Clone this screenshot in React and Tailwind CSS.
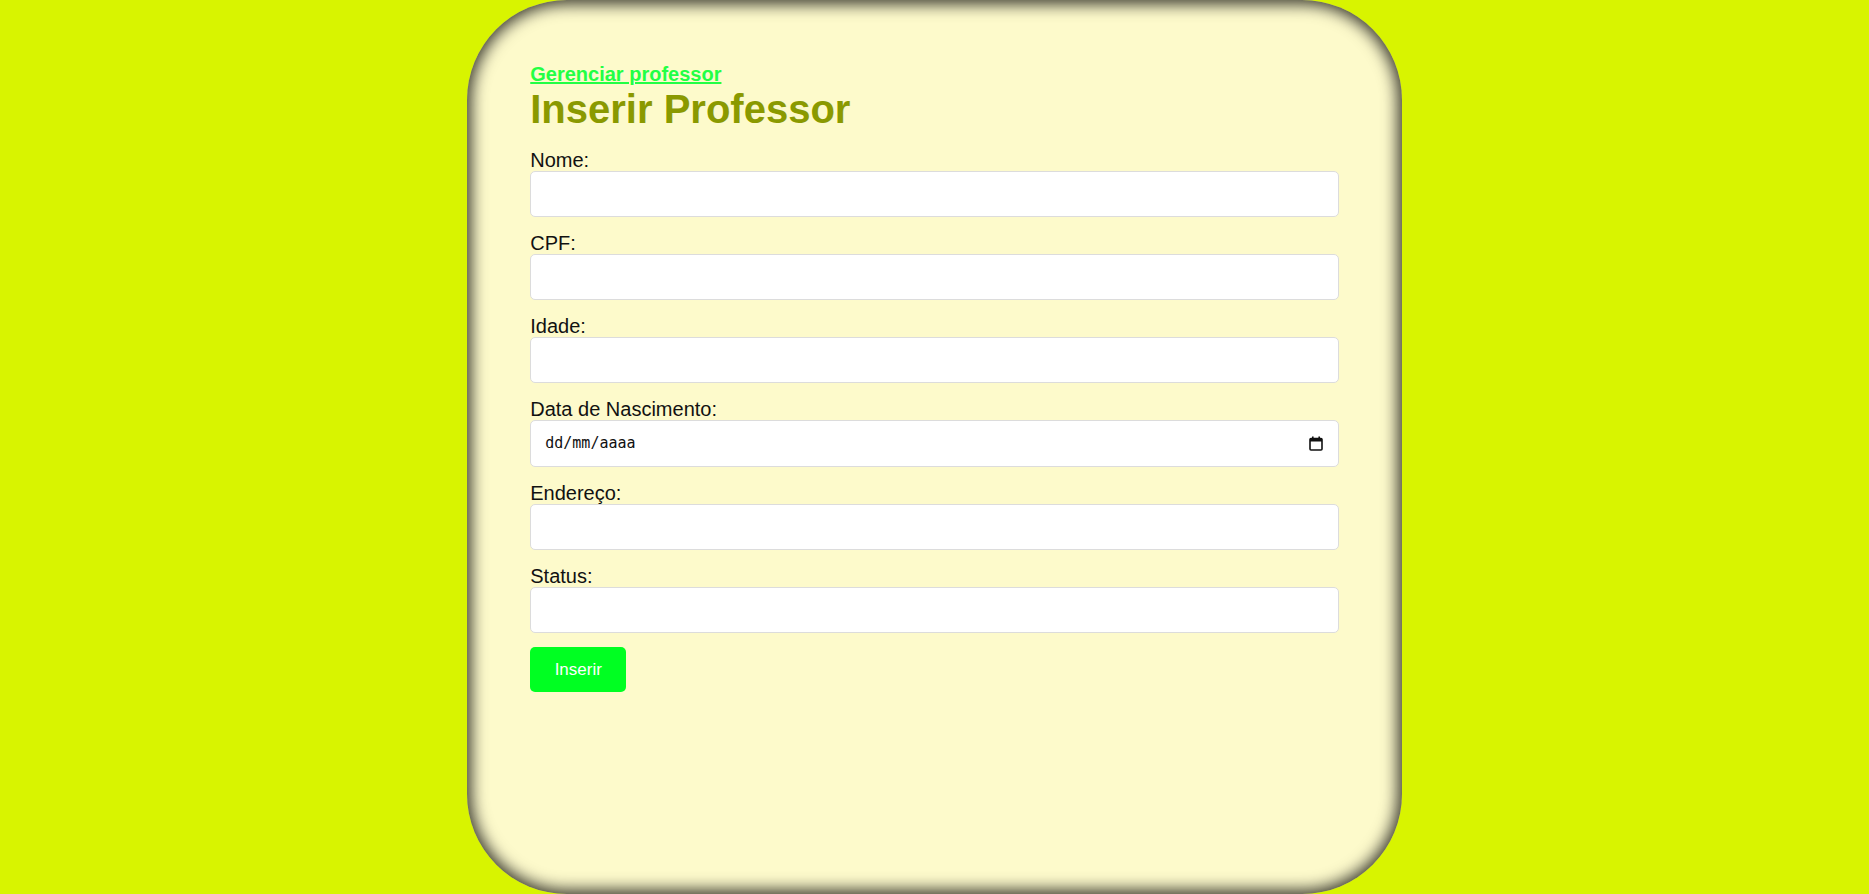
const fields = [
  { label: 'Nome:' },
  { label: 'CPF:' },
  { label: 'Idade:' },
  { label: 'Data de Nascimento:', date: true },
  { label: 'Endereço:' },
  { label: 'Status:' },
];

function CalendarIcon() {
  return (
    <svg width="14" height="15" viewBox="0 0 14 15" className="block">
      <rect x="1" y="2.5" width="12" height="11.5" rx="1" fill="none" stroke="#111" strokeWidth="1.6" />
      <rect x="1" y="2.5" width="12" height="3" fill="#111" />
      <rect x="3" y="0.5" width="1.6" height="3" fill="#111" />
      <rect x="9.4" y="0.5" width="1.6" height="3" fill="#111" />
    </svg>
  );
}

export default function App() {
  return (
    <div className="min-h-screen bg-[#d8f400] flex justify-center font-['Liberation_Sans',Arial,sans-serif]">
      <div className="w-1/2 h-screen bg-[#fdfacb] rounded-[100px] shadow-[inset_0_0_16px_4px_rgba(0,0,0,0.8)] px-[63px] pt-[63px]">
        <a href="#" className="block text-[20px] leading-[23px] font-bold text-[#22ff44] underline w-fit">
          Gerenciar professor
        </a>
        <h1 className="text-[40px] leading-[46px] font-bold text-[#8a9900]">Inserir Professor</h1>

        <form className="mt-[17px] flex flex-col" onSubmit={(e) => e.preventDefault()}>
          {fields.map((f) => (
            <div key={f.label} className="mb-[15px]">
              <label className="block text-[20px] leading-[22px] text-[#111]">{f.label}</label>
              {f.date ? (
                <div className="h-[47px] bg-white border border-[#dcdcdc] rounded-[5px] flex items-center justify-between pl-[14px] pr-[15px]">
                  <span className="font-['DejaVu_Sans_Mono',monospace] text-[15px] text-[#111]">dd/mm/aaaa</span>
                  <CalendarIcon />
                </div>
              ) : (
                <input
                  type="text"
                  className="block w-full h-[46px] bg-white border border-[#dcdcdc] rounded-[5px] px-3 outline-none"
                />
              )}
            </div>
          ))}
          <button
            type="submit"
            className="w-[96px] h-[45px] -mt-px bg-[#00ff22] rounded-[5px] text-white text-[17px]"
          >
            Inserir
          </button>
        </form>
      </div>
    </div>
  );
}
